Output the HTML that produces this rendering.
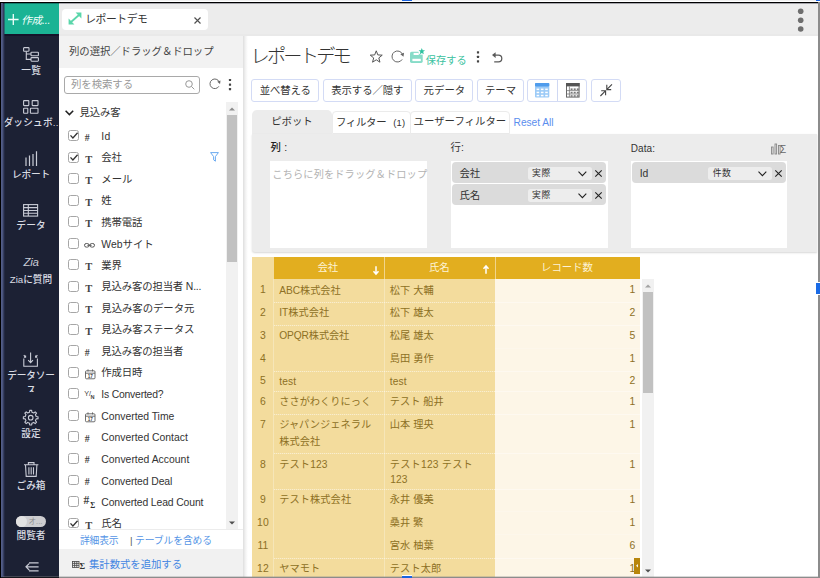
<!DOCTYPE html>
<html lang="ja"><head><meta charset="utf-8"><title>レポートデモ</title><style>
html,body{margin:0;padding:0;}
body{width:820px;height:578px;overflow:hidden;position:relative;background:#fff;font-family:"Liberation Sans","Noto Sans CJK JP",sans-serif;}
.a{position:absolute;}
.t{white-space:nowrap;}
svg{overflow:visible;}
</style></head><body>
<div class="a" style="left:59px;top:3px;width:759px;height:33px;background:#ececec;"></div>
<div class="a" style="left:59px;top:34.4px;width:759px;height:1.2px;background:#e9e9e9;"></div>
<div class="a" style="left:3px;top:3px;width:56px;height:575px;background:#1c2134;"></div>
<div class="a" style="left:3px;top:3px;width:56px;height:31px;background:#1bb394;"></div>
<svg class="a" style="left:7.8px;top:13.5px;" width="10.6" height="11" viewBox="0 0 10.6 11"><path d="M5.3 0V11M0 5.5H10.6" stroke="#f2fffb" stroke-width="1.3" fill="none"/></svg>
<div class="a t" style="top:12.55px;height:15.9px;line-height:15.9px;font-size:10.6px;color:#f4fffc;letter-spacing:-0.206px;left:21.2px;font-style:italic;"><span id="t1">作成...</span></div>
<div class="a" style="left:3px;top:34px;width:56px;height:1.6px;background:#15132a;"></div>
<div class="a" style="left:62.3px;top:9.2px;width:145.5px;height:21px;background:#fff;border-radius:4px;"></div>
<svg class="a" style="left:67.5px;top:12.3px;" width="14" height="13" viewBox="0 0 14 13"><path d="M3 10L11 3" stroke="#5ad6aa" stroke-width="1.8" fill="none"/><path d="M7.6 0.6H13.4V6.4Z M0.6 6.6V12.4H6.4Z" fill="#5ad6aa"/></svg>
<div class="a t" style="top:11.4px;height:16.2px;line-height:16.2px;font-size:10.8px;color:#333;letter-spacing:-0.413px;left:85.2px;"><span id="t2">レポートデモ</span></div>
<svg class="a" style="left:193.5px;top:16.5px;" width="7" height="7" viewBox="0 0 7 7"><path d="M0.5 0.5L6.5 6.5M6.5 0.5L0.5 6.5" stroke="#505050" stroke-width="1.15" fill="none"/></svg>
<svg class="a" style="left:797px;top:7px;" width="8" height="26" viewBox="0 0 8 26"><g fill="#6e6e6e"><circle cx="3.7" cy="4.2" r="2.8"/><circle cx="3.7" cy="13.2" r="2.8"/><circle cx="3.7" cy="22" r="2.8"/></g></svg>
<svg class="a" style="left:23px;top:47px;" width="16" height="15" viewBox="0 0 16 15"><g stroke="#c9ccd6" stroke-width="1.1" fill="none"><rect x="0.6" y="0.6" width="5.4" height="3.6" rx="0.6"/><rect x="8" y="5.2" width="7.4" height="3.6" rx="0.6"/><rect x="8" y="10.6" width="7.4" height="3.6" rx="0.6"/><path d="M3.3 4.2V12.4H8M3.3 7H8"/></g></svg>
<div class="a t" style="top:64.45px;height:14.5px;line-height:14.5px;font-size:9.7px;color:#d9dce3;font-weight:500;letter-spacing:0.312px;left:-119px;width:300px;text-align:center;text-indent:0.312px;"><span id="t3">一覧</span></div>
<svg class="a" style="left:23px;top:99.5px;" width="16" height="14" viewBox="0 0 16 14"><g stroke="#c9ccd6" stroke-width="1.1" fill="none"><rect x="0.6" y="0.6" width="5.2" height="5" rx="0.5"/><rect x="9.2" y="0.6" width="5.8" height="5" rx="0.5"/><rect x="0.6" y="8.2" width="4.2" height="5" rx="0.5"/><rect x="7.4" y="8.2" width="7.6" height="5" rx="0.5"/></g></svg>
<div class="a t" style="top:116.25px;height:14.5px;line-height:14.5px;font-size:9.7px;color:#dcdfe6;font-weight:500;letter-spacing:0.167px;left:3.5px;"><span id="t4">ダッシュボ..</span></div>
<svg class="a" style="left:24.5px;top:151px;" width="13" height="15" viewBox="0 0 13 15"><g stroke="#c9ccd6" stroke-width="1.2" fill="none"><path d="M1 15V6.4M4.5 15V4.6M8 15V3M11.5 15V0.3"/></g></svg>
<div class="a t" style="top:168.25px;height:14.5px;line-height:14.5px;font-size:9.7px;color:#d9dce3;font-weight:500;letter-spacing:-0.188px;left:-119px;width:300px;text-align:center;text-indent:-0.188px;"><span id="t5">レポート</span></div>
<svg class="a" style="left:23px;top:204px;" width="16" height="13" viewBox="0 0 16 13"><g stroke="#c9ccd6" stroke-width="1.1" fill="none"><rect x="0.6" y="0.6" width="14" height="11.5"/><path d="M0.6 3.6H14.6M0.6 6.5H14.6M0.6 9.3H14.6M5.3 0.6V12"/></g></svg>
<div class="a t" style="top:219.25px;height:14.5px;line-height:14.5px;font-size:9.7px;color:#d9dce3;font-weight:500;letter-spacing:0.141px;left:-119px;width:300px;text-align:center;text-indent:0.141px;"><span id="t6">データ</span></div>
<div class="a t" style="top:253.9px;height:17.2px;line-height:17.2px;font-size:11.5px;color:#c9ccd6;font-family:'Liberation Sans',sans-serif;left:-119px;width:300px;text-align:center;font-style:italic;letter-spacing:-0.3px;"><span id="t7">Zia</span></div>
<div class="a t" style="top:272.65px;height:14.5px;line-height:14.5px;font-size:9.7px;color:#d9dce3;font-weight:500;letter-spacing:-0.005px;left:-119px;width:300px;text-align:center;text-indent:-0.005px;"><span id="t8">Ziaに質問</span></div>
<svg class="a" style="left:23px;top:352px;" width="16" height="15" viewBox="0 0 16 15"><g stroke="#c9ccd6" stroke-width="1.1" fill="none"><path d="M0.8 6.5V14.2H14.4V6.5"/><path d="M7.6 0.5V10.5M5.2 8.2L7.6 10.6L10 8.2"/><path d="M0.8 3.2L2.5 5M2.6 3.4V5.2H0.9M14.4 3.2L12.7 5M12.6 3.4V5.2H14.3"/></g></svg>
<div class="a t" style="top:369.15px;height:14.5px;line-height:14.5px;font-size:9.7px;color:#d9dce3;font-weight:500;letter-spacing:-0.188px;left:-119px;width:300px;text-align:center;text-indent:-0.188px;"><span id="t9">データソー</span></div>
<div class="a t" style="top:384.25px;height:14.5px;line-height:14.5px;font-size:9.7px;color:#d9dce3;font-weight:500;letter-spacing:-2.188px;left:-119px;width:300px;text-align:center;text-indent:-2.188px;height:7.3px;overflow:hidden;"><span id="t10">ス</span></div>
<svg class="a" style="left:23px;top:410px;" width="16" height="16" viewBox="0 0 16 16"><g stroke="#c9ccd6" stroke-width="1.1" fill="none" stroke-linejoin="round"><path d="M13.17 6.52L15.03 6.71L15.03 8.69L13.17 8.88L12.40 10.74L13.58 12.19L12.19 13.58L10.74 12.40L8.88 13.17L8.69 15.03L6.71 15.03L6.52 13.17L4.66 12.40L3.21 13.58L1.82 12.19L3.00 10.74L2.23 8.88L0.37 8.69L0.37 6.71L2.23 6.52L3.00 4.66L1.82 3.21L3.21 1.82L4.66 3.00L6.52 2.23L6.71 0.37L8.69 0.37L8.88 2.23L10.74 3.00L12.19 1.82L13.58 3.21L12.40 4.66Z"/><circle cx="7.7" cy="7.7" r="2.3"/></g></svg>
<div class="a t" style="top:427.05px;height:14.5px;line-height:14.5px;font-size:9.7px;color:#d9dce3;font-weight:500;letter-spacing:0.062px;left:-119px;width:300px;text-align:center;text-indent:0.062px;"><span id="t11">設定</span></div>
<svg class="a" style="left:24.1px;top:461.6px;" width="14.4" height="15" viewBox="0 0 14.4 15"><g stroke="#c9ccd6" stroke-width="1.1" fill="none"><path d="M0 2.8H14.4M4.4 2.6V0.6H10V2.6M1.5 3L2.2 14.4H12.2L12.9 3M4.9 5.2V12.4M7.2 5.2V12.4M9.5 5.2V12.4"/></g></svg>
<div class="a t" style="top:478.65px;height:14.5px;line-height:14.5px;font-size:9.7px;color:#d9dce3;font-weight:500;letter-spacing:-0.021px;left:-119px;width:300px;text-align:center;text-indent:-0.021px;"><span id="t12">ごみ箱</span></div>
<div class="a" style="left:16px;top:516px;width:30px;height:11px;background:#cdcdd0;border-radius:6px;"></div>
<div class="a" style="left:16.4px;top:516.4px;width:10.2px;height:10.2px;background:#e2e2e2;border-radius:6px;"></div>
<div class="a t" style="top:515.9px;height:11.4px;line-height:11.4px;font-size:7.6px;color:#8f8f8f;letter-spacing:-0.082px;left:28.6px;"><span id="t13">オ...</span></div>
<div class="a t" style="top:529.15px;height:14.5px;line-height:14.5px;font-size:9.7px;color:#d9dce3;font-weight:500;letter-spacing:-0.021px;left:-119px;width:300px;text-align:center;text-indent:-0.021px;"><span id="t14">閲覧者</span></div>
<svg class="a" style="left:24.5px;top:562px;" width="14" height="10" viewBox="0 0 14 10"><g stroke="#c9ccd6" stroke-width="1.2" fill="none"><path d="M4 0.8H13.6M1 4.8H13.6M4 8.8H13.6M4.2 1.6L1 4.8L4.2 8"/></g></svg>
<div class="a" style="left:59px;top:36px;width:184px;height:32px;background:#f2f2f2;"></div>
<div class="a" style="left:243px;top:36px;width:4.5px;height:542px;background:linear-gradient(90deg,#dedede,#f4f4f4 55%,#fff);"></div>
<div class="a t" style="top:43.7px;height:15.6px;line-height:15.6px;font-size:10.4px;color:#444;letter-spacing:-0.07px;left:69px;"><span id="t15">列の選択／ドラッグ＆ドロップ</span></div>
<div class="a" style="left:63.5px;top:75.5px;width:136px;height:18.5px;background:#fff;border:1px solid #a9a9a9;box-sizing:border-box;border-radius:3px;"></div>
<div class="a t" style="top:76.5px;height:15.6px;line-height:15.6px;font-size:10.4px;color:#999;letter-spacing:-0.057px;left:71px;"><span id="t16">列を検索する</span></div>
<svg class="a" style="left:185px;top:80px;" width="10" height="10" viewBox="0 0 10 10"><g stroke="#999" stroke-width="1" fill="none"><circle cx="4" cy="4" r="3.3"/><path d="M6.5 6.5L9.3 9.3"/></g></svg>
<svg class="a" style="left:207.6px;top:77.2px;" width="13.6" height="13.6" viewBox="-6.8 -6.8 13.6 13.6"><path d="M4.07 2.54A4.8 4.8 0 1 1 4.45 -1.80" stroke="#666" stroke-width="1.0" fill="none"/><path d="M5.24 0.15L5.69 -3.36L2.47 -2.06Z" fill="#666"/></svg>
<svg class="a" style="left:228px;top:78px;" width="4" height="13" viewBox="0 0 4 13"><g fill="#444"><rect x="0.9" y="0.9" width="2.2" height="2.2" rx="0.5"/><rect x="0.9" y="5.5" width="2.2" height="2.2" rx="0.5"/><rect x="0.9" y="10" width="2.2" height="2.2" rx="0.5"/></g></svg>
<div class="a" style="left:226.3px;top:101.7px;width:11.6px;height:427.5px;background:#f1f1f1;"></div>
<div class="a" style="left:227.3px;top:114.5px;width:9.6px;height:147.5px;background:#c1c1c1;"></div>
<svg class="a" style="left:229.2px;top:106.8px;" width="6" height="4" viewBox="0 0 6 4"><path d="M0 3.5L3 0.5L6 3.5Z" fill="#8c8c8c"/></svg>
<svg class="a" style="left:229.2px;top:521px;" width="6" height="4" viewBox="0 0 6 4"><path d="M0 0.5L3 3.5L6 0.5Z" fill="#505050"/></svg>
<svg class="a" style="left:65.2px;top:110.4px;" width="9" height="6" viewBox="0 0 9 6"><path d="M0.6 0.7L4.4 4.6L8.2 0.7" stroke="#222" stroke-width="1.5" fill="none"/></svg>
<div class="a t" style="top:105.2px;height:15.6px;line-height:15.6px;font-size:10.4px;color:#333;letter-spacing:-0.141px;left:79.5px;"><span id="t17">見込み客</span></div>
<div class="a" style="left:68.2px;top:130.2px;width:10.8px;height:10.9px;background:#fff;border:1px solid #a6a6a6;box-sizing:border-box;border-radius:2.5px;"></div>
<svg class="a" style="left:70px;top:132.4px;" width="8" height="7" viewBox="0 0 8 7"><path d="M0.5 3.4L2.9 6L7.6 0.8" stroke="#333" stroke-width="1.3" fill="none"/></svg>
<div class="a t" style="top:130.55px;height:14.7px;line-height:14.7px;font-size:9.8px;color:#444;font-weight:700;font-family:'Liberation Serif',serif;left:84.8px;"><span id="t18">#</span></div>
<div class="a t" style="top:129.2px;height:15.6px;line-height:15.6px;font-size:10.4px;color:#333;letter-spacing:0.414px;left:101.3px;"><span id="t19">Id</span></div>
<div class="a" style="left:68.2px;top:151.72px;width:10.8px;height:10.9px;background:#fff;border:1px solid #a6a6a6;box-sizing:border-box;border-radius:2.5px;"></div>
<svg class="a" style="left:70px;top:153.92px;" width="8" height="7" viewBox="0 0 8 7"><path d="M0.5 3.4L2.9 6L7.6 0.8" stroke="#333" stroke-width="1.3" fill="none"/></svg>
<div class="a t" style="top:151.82px;height:15.8px;line-height:15.8px;font-size:10.5px;color:#444;font-weight:700;font-family:'Liberation Serif',serif;left:85.3px;"><span id="t20">T</span></div>
<div class="a t" style="top:150.02px;height:15.6px;line-height:15.6px;font-size:10.4px;color:#333;letter-spacing:-0.141px;left:101.3px;"><span id="t21">会社</span></div>
<div class="a" style="left:68.2px;top:173.24px;width:10.8px;height:10.9px;background:#fff;border:1px solid #a6a6a6;box-sizing:border-box;border-radius:2.5px;"></div>
<div class="a t" style="top:173.34px;height:15.8px;line-height:15.8px;font-size:10.5px;color:#444;font-weight:700;font-family:'Liberation Serif',serif;left:85.3px;"><span id="t22">T</span></div>
<div class="a t" style="top:171.54px;height:15.6px;line-height:15.6px;font-size:10.4px;color:#333;letter-spacing:-0.062px;left:101.3px;"><span id="t23">メール</span></div>
<div class="a" style="left:68.2px;top:194.76px;width:10.8px;height:10.9px;background:#fff;border:1px solid #a6a6a6;box-sizing:border-box;border-radius:2.5px;"></div>
<div class="a t" style="top:194.86px;height:15.8px;line-height:15.8px;font-size:10.5px;color:#444;font-weight:700;font-family:'Liberation Serif',serif;left:85.3px;"><span id="t24">T</span></div>
<div class="a t" style="top:193.06px;height:15.6px;line-height:15.6px;font-size:10.4px;color:#333;letter-spacing:0.109px;left:101.3px;"><span id="t25">姓</span></div>
<div class="a" style="left:68.2px;top:216.28px;width:10.8px;height:10.9px;background:#fff;border:1px solid #a6a6a6;box-sizing:border-box;border-radius:2.5px;"></div>
<div class="a t" style="top:216.38px;height:15.8px;line-height:15.8px;font-size:10.5px;color:#444;font-weight:700;font-family:'Liberation Serif',serif;left:85.3px;"><span id="t26">T</span></div>
<div class="a t" style="top:214.58px;height:15.6px;line-height:15.6px;font-size:10.4px;color:#333;letter-spacing:-0.141px;left:101.3px;"><span id="t27">携帯電話</span></div>
<div class="a" style="left:68.2px;top:237.8px;width:10.8px;height:10.9px;background:#fff;border:1px solid #a6a6a6;box-sizing:border-box;border-radius:2.5px;"></div>
<svg class="a" style="left:84.3px;top:242.6px;" width="11" height="5" viewBox="0 0 11 5"><g stroke="#555" stroke-width="1" fill="none"><rect x="0.5" y="0.5" width="4.6" height="3.6" rx="1.8"/><rect x="5.9" y="0.5" width="4.6" height="3.6" rx="1.8"/><path d="M3.4 2.3H7.6"/></g></svg>
<div class="a t" style="top:236.8px;height:15.6px;line-height:15.6px;font-size:10.4px;color:#333;letter-spacing:0.023px;left:101.3px;"><span id="t28">Webサイト</span></div>
<div class="a" style="left:68.2px;top:259.32px;width:10.8px;height:10.9px;background:#fff;border:1px solid #a6a6a6;box-sizing:border-box;border-radius:2.5px;"></div>
<div class="a t" style="top:259.42px;height:15.8px;line-height:15.8px;font-size:10.5px;color:#444;font-weight:700;font-family:'Liberation Serif',serif;left:85.3px;"><span id="t29">T</span></div>
<div class="a t" style="top:257.62px;height:15.6px;line-height:15.6px;font-size:10.4px;color:#333;letter-spacing:-0.141px;left:101.3px;"><span id="t30">業界</span></div>
<div class="a" style="left:68.2px;top:280.84px;width:10.8px;height:10.9px;background:#fff;border:1px solid #a6a6a6;box-sizing:border-box;border-radius:2.5px;"></div>
<div class="a t" style="top:280.94px;height:15.8px;line-height:15.8px;font-size:10.5px;color:#444;font-weight:700;font-family:'Liberation Serif',serif;left:85.3px;"><span id="t31">T</span></div>
<div class="a t" style="top:279.14px;height:15.6px;line-height:15.6px;font-size:10.4px;color:#333;letter-spacing:-0.168px;left:101.3px;"><span id="t32">見込み客の担当者 N...</span></div>
<div class="a" style="left:68.2px;top:302.36px;width:10.8px;height:10.9px;background:#fff;border:1px solid #a6a6a6;box-sizing:border-box;border-radius:2.5px;"></div>
<div class="a t" style="top:302.46px;height:15.8px;line-height:15.8px;font-size:10.5px;color:#444;font-weight:700;font-family:'Liberation Serif',serif;left:85.3px;"><span id="t33">T</span></div>
<div class="a t" style="top:300.66px;height:15.6px;line-height:15.6px;font-size:10.4px;color:#333;letter-spacing:-0.057px;left:101.3px;"><span id="t34">見込み客のデータ元</span></div>
<div class="a" style="left:68.2px;top:323.88px;width:10.8px;height:10.9px;background:#fff;border:1px solid #a6a6a6;box-sizing:border-box;border-radius:2.5px;"></div>
<div class="a t" style="top:323.98px;height:15.8px;line-height:15.8px;font-size:10.5px;color:#444;font-weight:700;font-family:'Liberation Serif',serif;left:85.3px;"><span id="t35">T</span></div>
<div class="a t" style="top:322.18px;height:15.6px;line-height:15.6px;font-size:10.4px;color:#333;letter-spacing:-0.057px;left:101.3px;"><span id="t36">見込み客ステータス</span></div>
<div class="a" style="left:68.2px;top:345.4px;width:10.8px;height:10.9px;background:#fff;border:1px solid #a6a6a6;box-sizing:border-box;border-radius:2.5px;"></div>
<div class="a t" style="top:345.75px;height:14.7px;line-height:14.7px;font-size:9.8px;color:#444;font-weight:700;font-family:'Liberation Serif',serif;left:84.8px;"><span id="t37">#</span></div>
<div class="a t" style="top:343.7px;height:15.6px;line-height:15.6px;font-size:10.4px;color:#333;letter-spacing:-0.141px;left:101.3px;"><span id="t38">見込み客の担当者</span></div>
<div class="a" style="left:68.2px;top:366.92px;width:10.8px;height:10.9px;background:#fff;border:1px solid #a6a6a6;box-sizing:border-box;border-radius:2.5px;"></div>
<svg class="a" style="left:84.8px;top:369.32px;" width="10.5" height="10.5" viewBox="0 0 10.5 10.5"><g stroke="#5e5e5e" stroke-width="0.9" fill="none"><rect x="0.5" y="1.8" width="9.5" height="8" rx="1"/><path d="M0.5 4.2H10M3 0.4V2.4M7.5 0.4V2.4"/></g><text x="5.25" y="8.9" font-size="4.6" text-anchor="middle" fill="#444" font-family="Liberation Sans,sans-serif" font-weight="700">17</text></svg>
<div class="a t" style="top:365.22px;height:15.6px;line-height:15.6px;font-size:10.4px;color:#333;letter-spacing:-0.141px;left:101.3px;"><span id="t39">作成日時</span></div>
<div class="a" style="left:68.2px;top:388.44px;width:10.8px;height:10.9px;background:#fff;border:1px solid #a6a6a6;box-sizing:border-box;border-radius:2.5px;"></div>
<div class="a t" style="top:388.64px;height:10.8px;line-height:10.8px;font-size:7.2px;color:#444;font-family:'Liberation Sans',sans-serif;left:84.3px;"><span id="t40">Y/</span></div>
<div class="a t" style="top:392.64px;height:8.4px;line-height:8.4px;font-size:5.6px;color:#444;font-weight:700;font-family:'Liberation Sans',sans-serif;left:90.6px;"><span id="t41">N</span></div>
<div class="a t" style="top:387.44px;height:15.6px;line-height:15.6px;font-size:10.4px;color:#333;letter-spacing:-0.207px;left:101.3px;"><span id="t42">Is Converted?</span></div>
<div class="a" style="left:68.2px;top:409.96px;width:10.8px;height:10.9px;background:#fff;border:1px solid #a6a6a6;box-sizing:border-box;border-radius:2.5px;"></div>
<svg class="a" style="left:84.8px;top:412.36px;" width="10.5" height="10.5" viewBox="0 0 10.5 10.5"><g stroke="#5e5e5e" stroke-width="0.9" fill="none"><rect x="0.5" y="1.8" width="9.5" height="8" rx="1"/><path d="M0.5 4.2H10M3 0.4V2.4M7.5 0.4V2.4"/></g><text x="5.25" y="8.9" font-size="4.6" text-anchor="middle" fill="#444" font-family="Liberation Sans,sans-serif" font-weight="700">17</text></svg>
<div class="a t" style="top:408.96px;height:15.6px;line-height:15.6px;font-size:10.4px;color:#333;letter-spacing:-0.025px;left:101.3px;"><span id="t43">Converted Time</span></div>
<div class="a" style="left:68.2px;top:431.48px;width:10.8px;height:10.9px;background:#fff;border:1px solid #a6a6a6;box-sizing:border-box;border-radius:2.5px;"></div>
<div class="a t" style="top:431.83px;height:14.7px;line-height:14.7px;font-size:9.8px;color:#444;font-weight:700;font-family:'Liberation Serif',serif;left:84.8px;"><span id="t44">#</span></div>
<div class="a t" style="top:430.48px;height:15.6px;line-height:15.6px;font-size:10.4px;color:#333;letter-spacing:-0.008px;left:101.3px;"><span id="t45">Converted Contact</span></div>
<div class="a" style="left:68.2px;top:453.0px;width:10.8px;height:10.9px;background:#fff;border:1px solid #a6a6a6;box-sizing:border-box;border-radius:2.5px;"></div>
<div class="a t" style="top:453.35px;height:14.7px;line-height:14.7px;font-size:9.8px;color:#444;font-weight:700;font-family:'Liberation Serif',serif;left:84.8px;"><span id="t46">#</span></div>
<div class="a t" style="top:452.0px;height:15.6px;line-height:15.6px;font-size:10.4px;color:#333;letter-spacing:0.011px;left:101.3px;"><span id="t47">Converted Account</span></div>
<div class="a" style="left:68.2px;top:474.52px;width:10.8px;height:10.9px;background:#fff;border:1px solid #a6a6a6;box-sizing:border-box;border-radius:2.5px;"></div>
<div class="a t" style="top:474.87px;height:14.7px;line-height:14.7px;font-size:9.8px;color:#444;font-weight:700;font-family:'Liberation Serif',serif;left:84.8px;"><span id="t48">#</span></div>
<div class="a t" style="top:473.52px;height:15.6px;line-height:15.6px;font-size:10.4px;color:#333;letter-spacing:-0.086px;left:101.3px;"><span id="t49">Converted Deal</span></div>
<div class="a" style="left:68.2px;top:496.04px;width:10.8px;height:10.9px;background:#fff;border:1px solid #a6a6a6;box-sizing:border-box;border-radius:2.5px;"></div>
<div class="a t" style="top:491.64px;height:17.2px;line-height:17.2px;font-size:11.5px;color:#444;font-weight:700;font-family:'Liberation Serif',serif;left:83.4px;"><span id="t50">#</span></div>
<div class="a t" style="top:499.54px;height:11.2px;line-height:11.2px;font-size:7.5px;color:#333;font-weight:700;font-family:'Liberation Serif',serif;left:90.2px;"><span id="t51">Σ</span></div>
<div class="a t" style="top:495.04px;height:15.6px;line-height:15.6px;font-size:10.4px;color:#333;letter-spacing:-0.128px;left:101.3px;"><span id="t52">Converted Lead Count</span></div>
<div class="a" style="left:68.2px;top:517.56px;width:10.8px;height:10.9px;background:#fff;border:1px solid #a6a6a6;box-sizing:border-box;border-radius:2.5px;"></div>
<svg class="a" style="left:70px;top:519.76px;" width="8" height="7" viewBox="0 0 8 7"><path d="M0.5 3.4L2.9 6L7.6 0.8" stroke="#333" stroke-width="1.3" fill="none"/></svg>
<div class="a t" style="top:517.66px;height:15.8px;line-height:15.8px;font-size:10.5px;color:#444;font-weight:700;font-family:'Liberation Serif',serif;left:85.3px;"><span id="t53">T</span></div>
<div class="a t" style="top:515.86px;height:15.6px;line-height:15.6px;font-size:10.4px;color:#333;letter-spacing:-0.141px;left:101.3px;"><span id="t54">氏名</span></div>
<svg class="a" style="left:210.2px;top:152.3px;" width="9" height="10" viewBox="0 0 9 10"><path d="M0.6 0.6H8.4L5.4 4.6V9.2L3.6 7.8V4.6Z" stroke="#5aa0ee" stroke-width="0.9" fill="none" stroke-linejoin="round"/></svg>
<div class="a" style="left:59px;top:529.4px;width:184px;height:19.4px;background:#fff;"></div>
<div class="a" style="left:59px;top:529.4px;width:184px;height:1px;background:#ececec;"></div>
<div class="a t" style="top:533.75px;height:14.7px;line-height:14.7px;font-size:9.8px;color:#5595e6;letter-spacing:-0.172px;left:80px;"><span id="t55">詳細表示</span></div>
<div class="a t" style="top:533.75px;height:14.7px;line-height:14.7px;font-size:9.8px;color:#555;left:130px;"><span id="t56">|</span></div>
<div class="a t" style="top:533.75px;height:14.7px;line-height:14.7px;font-size:9.8px;color:#5595e6;letter-spacing:-0.1px;left:135px;"><span id="t57">テーブルを含める</span></div>
<div class="a" style="left:59px;top:548.8px;width:184px;height:29px;background:#f1f1f1;"></div>
<svg class="a" style="left:72.1px;top:560.6px;" width="7.4" height="6.8" viewBox="0 0 7.4 6.8"><g stroke="#444" stroke-width="0.8" fill="none"><rect x="0.4" y="0.4" width="6.6" height="6"/><path d="M0.4 2.4H7M0.4 4.4H7M2.6 0.4V6.4M4.8 0.4V6.4"/></g></svg>
<div class="a t" style="top:559.6px;height:12.8px;line-height:12.8px;font-size:8.5px;color:#333;font-weight:700;font-family:'Liberation Serif',serif;left:79.5px;"><span id="t58">Σ</span></div>
<div class="a t" style="top:557.3px;height:15.6px;line-height:15.6px;font-size:10.4px;color:#4285e2;letter-spacing:-0.057px;left:89px;"><span id="t59">集計数式を追加する</span></div>
<div class="a t" style="top:43.0px;height:28.8px;line-height:28.8px;font-size:19.2px;color:#333;font-weight:300;letter-spacing:-2.771px;left:250.5px;"><span id="t60">レポートデモ</span></div>
<svg class="a" style="left:370px;top:50px;" width="13" height="13" viewBox="0 0 13 13"><path d="M6.25 0.80L7.84 4.92L12.24 5.15L8.82 7.93L9.95 12.20L6.25 9.80L2.55 12.20L3.68 7.93L0.26 5.15L4.66 4.92Z" stroke="#555" stroke-width="1" fill="none" stroke-linejoin="round"/></svg>
<svg class="a" style="left:389.5px;top:49.4px;" width="15.0" height="15.0" viewBox="-7.5 -7.5 15.0 15.0"><path d="M4.66 2.91A5.5 5.5 0 1 1 5.10 -2.06" stroke="#666" stroke-width="1.0" fill="none"/><path d="M6.00 0.16L6.52 -3.84L2.84 -2.36Z" fill="#666"/></svg>
<svg class="a" style="left:410.3px;top:48px;" width="16" height="15" viewBox="0 0 16 15"><rect x="0" y="3.8" width="12.7" height="11.1" rx="1.6" fill="#86dcc8"/><rect x="3.6" y="4.9" width="5.2" height="2.1" fill="#fff"/><rect x="2.4" y="10.8" width="8.4" height="2.3" fill="#fff"/><circle cx="11.9" cy="3.2" r="3.5" fill="#fff"/><path d="M11.80 0.00L12.68 2.19L15.03 2.35L13.23 3.86L13.80 6.15L11.80 4.90L9.80 6.15L10.37 3.86L8.57 2.35L10.92 2.19Z" fill="#2fc2a0"/></svg>
<div class="a t" style="top:52.55px;height:15.3px;line-height:15.3px;font-size:10.2px;color:#3cc2a0;letter-spacing:0.062px;left:425.8px;"><span id="t61">保存する</span></div>
<svg class="a" style="left:475.5px;top:50px;" width="4" height="14" viewBox="0 0 4 14"><g fill="#444"><rect x="0.9" y="1.2" width="2.2" height="2.2" rx="0.5"/><rect x="0.9" y="5.7" width="2.2" height="2.2" rx="0.5"/><rect x="0.9" y="10.2" width="2.2" height="2.2" rx="0.5"/></g></svg>
<svg class="a" style="left:492px;top:51.6px;" width="11" height="11" viewBox="0 0 11 11"><path d="M2.6 3.1H6.4A3.4 3.4 0 0 1 6.4 9.9H2.2" stroke="#5a5a5a" stroke-width="1.25" fill="none"/><path d="M0 3.1L3.6 0.2V6Z" fill="#5a5a5a"/></svg>
<div class="a" style="left:251.2px;top:79px;width:67.8px;height:22.5px;background:#fff;border:1px solid #d3dbf5;box-sizing:border-box;border-radius:3px;"></div>
<div class="a t" style="top:82.6px;height:15.6px;line-height:15.6px;font-size:10.4px;color:#333;letter-spacing:-0.131px;left:259.7px;"><span id="t62">並べ替える</span></div>
<div class="a" style="left:323.2px;top:79px;width:88.8px;height:22.5px;background:#fff;border:1px solid #d3dbf5;box-sizing:border-box;border-radius:3px;"></div>
<div class="a t" style="top:82.6px;height:15.6px;line-height:15.6px;font-size:10.4px;color:#333;letter-spacing:-0.077px;left:331.2px;"><span id="t63">表示する／隠す</span></div>
<div class="a" style="left:415.2px;top:79px;width:57.6px;height:22.5px;background:#fff;border:1px solid #d3dbf5;box-sizing:border-box;border-radius:3px;"></div>
<div class="a t" style="top:82.6px;height:15.6px;line-height:15.6px;font-size:10.4px;color:#333;letter-spacing:0.009px;left:423.6px;"><span id="t64">元データ</span></div>
<div class="a" style="left:477px;top:79px;width:46.5px;height:22.5px;background:#fff;border:1px solid #d3dbf5;box-sizing:border-box;border-radius:3px;"></div>
<div class="a t" style="top:82.6px;height:15.6px;line-height:15.6px;font-size:10.4px;color:#333;letter-spacing:-0.062px;left:485px;"><span id="t65">テーマ</span></div>
<div class="a" style="left:527.3px;top:79px;width:60px;height:22.5px;background:#fff;border:1px solid #d3dbf5;box-sizing:border-box;border-radius:3px;"></div>
<div class="a" style="left:557px;top:80px;width:1px;height:21px;background:#cfd8f3;"></div>
<svg class="a" style="left:535.4px;top:82.9px;" width="14.3" height="14.6" viewBox="0 0 14.3 14.6"><rect x="0" y="0" width="14.3" height="14.6" rx="1" fill="#9ccbf7"/><rect x="0" y="0" width="14.3" height="3.4" rx="0.8" fill="#4f9cec"/><rect x="1.6" y="5.6" width="2.6" height="1.5" fill="#fff"/><rect x="5.9" y="5.6" width="2.6" height="1.5" fill="#fff"/><rect x="10.2" y="5.6" width="2.6" height="1.5" fill="#fff"/><rect x="1.6" y="8.7" width="2.6" height="1.5" fill="#fff"/><rect x="5.9" y="8.7" width="2.6" height="1.5" fill="#fff"/><rect x="10.2" y="8.7" width="2.6" height="1.5" fill="#fff"/><rect x="1.6" y="11.8" width="2.6" height="1.5" fill="#fff"/><rect x="5.9" y="11.8" width="2.6" height="1.5" fill="#fff"/><rect x="10.2" y="11.8" width="2.6" height="1.5" fill="#fff"/></svg>
<svg class="a" style="left:565.7px;top:82.9px;" width="13.6" height="14.6" viewBox="0 0 13.6 14.6"><rect x="0.5" y="0.5" width="12.6" height="13.6" fill="#fff" stroke="#666" stroke-width="1"/><rect x="0" y="0" width="13.6" height="3.4" fill="#555"/><path d="M0.5 7.6H13M0.5 11H13M3.4 3.4V14" stroke="#777" stroke-width="0.8" fill="none"/><rect x="4.6" y="5.4" width="2" height="1.6" fill="#777"/><rect x="7.7" y="5.4" width="2" height="1.6" fill="#777"/><rect x="10.8" y="5.4" width="2" height="1.6" fill="#777"/><rect x="4.6" y="8.8" width="2" height="1.6" fill="#777"/><rect x="7.7" y="8.8" width="2" height="1.6" fill="#777"/><rect x="10.8" y="8.8" width="2" height="1.6" fill="#777"/><rect x="4.6" y="12.2" width="2" height="1.6" fill="#777"/><rect x="7.7" y="12.2" width="2" height="1.6" fill="#777"/><rect x="10.8" y="12.2" width="2" height="1.6" fill="#777"/></svg>
<div class="a" style="left:591px;top:79px;width:30px;height:22.5px;background:#fff;border:1px solid #d3dbf5;box-sizing:border-box;border-radius:3px;"></div>
<svg class="a" style="left:599.8px;top:84px;" width="12.4" height="12.4" viewBox="0 0 12.4 12.4"><g stroke="#444" stroke-width="1.1" fill="none"><path d="M0.4 12L5.2 7.2M1.2 6.8H5.6V11.2"/><path d="M12 0.4L7.2 5.2M6.8 0.8V5.6H11.2"/></g></svg>
<div class="a" style="left:251.8px;top:110.4px;width:80.3px;height:24px;background:#ececec;border-radius:5px 5px 0 0;"></div>
<div class="a t" style="top:114.4px;height:15.6px;line-height:15.6px;font-size:10.4px;color:#333;letter-spacing:-0.016px;left:271.2px;"><span id="t66">ピボット</span></div>
<div class="a" style="left:332px;top:111px;width:78.5px;height:23.2px;background:#fff;border:1px solid #ebebeb;box-sizing:border-box;border-radius:4px 4px 0 0;"></div>
<div class="a t" style="top:114.6px;height:15.6px;line-height:15.6px;font-size:10.4px;color:#333;letter-spacing:-0.25px;left:335.9px;"><span id="t67">フィルター</span></div>
<div class="a t" style="top:115.75px;height:14.1px;line-height:14.1px;font-size:9.4px;color:#333;letter-spacing:0.246px;left:393.2px;"><span id="t68">(1)</span></div>
<div class="a" style="left:410px;top:111px;width:100px;height:23.2px;background:#fff;border:1px solid #ebebeb;box-sizing:border-box;border-radius:4px 4px 0 0;"></div>
<div class="a t" style="top:114.4px;height:15.6px;line-height:15.6px;font-size:10.4px;color:#333;letter-spacing:0.014px;left:413.6px;"><span id="t69">ユーザーフィルター</span></div>
<div class="a t" style="top:115.25px;height:15.3px;line-height:15.3px;font-size:10.2px;color:#5a8eee;letter-spacing:-0.046px;left:513.6px;"><span id="t70">Reset All</span></div>
<div class="a" style="left:252.2px;top:134px;width:565.3px;height:118.2px;background:#ececec;border-radius:0 0 0 3px;box-shadow:0 1px 2px rgba(0,0,0,0.16);"></div>
<div class="a t" style="top:139.8px;height:15.6px;line-height:15.6px;font-size:10.4px;color:#222;font-weight:500;letter-spacing:0.276px;left:270.5px;"><span id="t71">列 :</span></div>
<div class="a t" style="top:139.8px;height:15.6px;line-height:15.6px;font-size:10.4px;color:#333;letter-spacing:0.109px;left:450.5px;"><span id="t72">行:</span></div>
<div class="a t" style="top:140.9px;height:15.0px;line-height:15.0px;font-size:10px;color:#333;letter-spacing:0.119px;left:630.7px;"><span id="t73">Data:</span></div>
<div class="a" style="left:270.4px;top:161px;width:157px;height:86.5px;background:#fff;"></div>
<div class="a" style="left:451px;top:161px;width:156.5px;height:86.5px;background:#fff;"></div>
<div class="a" style="left:630.5px;top:161px;width:156.5px;height:86.5px;background:#fff;"></div>
<div class="a t" style="top:166.65px;height:15.3px;line-height:15.3px;font-size:10.2px;color:#b3b3b3;letter-spacing:0.145px;left:272.3px;"><span id="t74">こちらに列をドラッグ＆ドロップ</span></div>
<svg class="a" style="left:770.5px;top:143px;" width="16" height="12" viewBox="0 0 16 12"><g stroke="#888" stroke-width="0.9" fill="none"><rect x="0.5" y="4" width="1.6" height="7"/><rect x="4" y="1" width="1.6" height="10"/><rect x="7.5" y="2.5" width="1.6" height="8.5"/></g></svg>
<div class="a t" style="top:142.3px;height:15.8px;line-height:15.8px;font-size:10.5px;color:#666;font-family:'Liberation Sans',sans-serif;left:779.7px;"><span id="t75">Σ</span></div>
<div class="a" style="left:452.2px;top:162.2px;width:153.8px;height:20.6px;background:#dbdbdb;border-radius:4px;"></div>
<div class="a t" style="top:165.9px;height:15.6px;line-height:15.6px;font-size:10.4px;color:#333;letter-spacing:-0.141px;left:459.5px;"><span id="t76">会社</span></div>
<div class="a" style="left:528px;top:166.8px;width:63.5px;height:13px;background:#ededed;border-radius:2.5px;"></div>
<div class="a t" style="top:166.6px;height:13.2px;line-height:13.2px;font-size:8.8px;color:#333;letter-spacing:0.703px;left:532px;"><span id="t77">実際</span></div>
<svg class="a" style="left:578.3px;top:170.6px;" width="9" height="6" viewBox="0 0 9 6"><path d="M0.5 0.7L4.4 4.6L8.3 0.7" stroke="#222" stroke-width="1.1" fill="none"/></svg>
<svg class="a" style="left:594.7px;top:170.0px;" width="7" height="7" viewBox="0 0 7 7"><path d="M0.3 0.3L6.7 6.7M6.7 0.3L0.3 6.7" stroke="#222" stroke-width="1.1" fill="none"/></svg>
<div class="a" style="left:452.2px;top:184.39999999999998px;width:153.8px;height:20.6px;background:#dbdbdb;border-radius:4px;"></div>
<div class="a t" style="top:188.1px;height:15.6px;line-height:15.6px;font-size:10.4px;color:#333;letter-spacing:-0.141px;left:459.5px;"><span id="t78">氏名</span></div>
<div class="a" style="left:528px;top:189.0px;width:63.5px;height:13px;background:#ededed;border-radius:2.5px;"></div>
<div class="a t" style="top:188.8px;height:13.2px;line-height:13.2px;font-size:8.8px;color:#333;letter-spacing:0.703px;left:532px;"><span id="t79">実際</span></div>
<svg class="a" style="left:578.3px;top:192.79999999999998px;" width="9" height="6" viewBox="0 0 9 6"><path d="M0.5 0.7L4.4 4.6L8.3 0.7" stroke="#222" stroke-width="1.1" fill="none"/></svg>
<svg class="a" style="left:594.7px;top:192.2px;" width="7" height="7" viewBox="0 0 7 7"><path d="M0.3 0.3L6.7 6.7M6.7 0.3L0.3 6.7" stroke="#222" stroke-width="1.1" fill="none"/></svg>
<div class="a" style="left:632.3px;top:162.2px;width:153.7px;height:20.6px;background:#dbdbdb;border-radius:4px;"></div>
<div class="a t" style="top:166.3px;height:15.6px;line-height:15.6px;font-size:10.4px;color:#333;letter-spacing:-0.086px;left:639.8px;"><span id="t80">Id</span></div>
<div class="a" style="left:708.4px;top:166.8px;width:63.3px;height:13px;background:#ededed;border-radius:2.5px;"></div>
<div class="a t" style="top:166.6px;height:13.2px;line-height:13.2px;font-size:8.8px;color:#333;letter-spacing:0.453px;left:712.8px;"><span id="t81">件数</span></div>
<svg class="a" style="left:758.4px;top:170.6px;" width="9" height="6" viewBox="0 0 9 6"><path d="M0.5 0.7L4.4 4.6L8.3 0.7" stroke="#222" stroke-width="1.1" fill="none"/></svg>
<svg class="a" style="left:774.7px;top:170.0px;" width="7" height="7" viewBox="0 0 7 7"><path d="M0.3 0.3L6.7 6.7M6.7 0.3L0.3 6.7" stroke="#222" stroke-width="1.1" fill="none"/></svg>
<div class="a" style="left:252.2px;top:257px;width:243.2px;height:321px;background:#f3dc9d;"></div>
<div class="a" style="left:495.4px;top:278.6px;width:145.0px;height:299.4px;background:#fdf6e7;"></div>
<div class="a" style="left:273.7px;top:257px;width:366.7px;height:21.6px;background:#e2ae1f;"></div>
<div class="a" style="left:384.1px;top:257px;width:1px;height:21.6px;background:#f1d58c;"></div>
<div class="a" style="left:494.9px;top:257px;width:1px;height:21.6px;background:#f1d58c;"></div>
<div class="a t" style="top:259.9px;height:15.6px;line-height:15.6px;font-size:10.4px;color:#fdf3d6;letter-spacing:-0.141px;left:177.8px;width:300px;text-align:center;text-indent:-0.141px;"><span id="t82">会社</span></div>
<div class="a t" style="top:259.9px;height:15.6px;line-height:15.6px;font-size:10.4px;color:#fdf3d6;letter-spacing:-0.141px;left:289.4px;width:300px;text-align:center;text-indent:-0.141px;"><span id="t83">氏名</span></div>
<div class="a t" style="top:259.9px;height:15.6px;line-height:15.6px;font-size:10.4px;color:#fdf3d6;letter-spacing:0.009px;left:417px;width:300px;text-align:center;text-indent:0.009px;"><span id="t84">レコード数</span></div>
<svg class="a" style="left:372.8px;top:265.6px;" width="6" height="9" viewBox="0 0 6 9"><path d="M3 0.2V8M0.5 5.2L3 8L5.5 5.2" stroke="#fff" stroke-width="1.5" fill="none"/></svg>
<svg class="a" style="left:482.8px;top:265.2px;" width="6" height="9" viewBox="0 0 6 9"><path d="M3 8.8V1M0.5 3.8L3 1L5.5 3.8" stroke="#fff" stroke-width="1.5" fill="none"/></svg>
<div class="a" style="left:273.2px;top:278.6px;width:1px;height:299.4px;background:#f6e6b8;"></div>
<div class="a" style="left:384.1px;top:278.6px;width:1px;height:299.4px;background:#f6e6b8;"></div>
<div class="a" style="left:273.7px;top:301.9px;width:221.7px;height:1px;background:repeating-linear-gradient(90deg,rgba(255,255,255,0.5) 0,rgba(255,255,255,0.5) 1px,rgba(255,255,255,0.12) 1px,rgba(255,255,255,0.12) 2px);"></div>
<div class="a" style="left:495.4px;top:301.9px;width:145.0px;height:1px;background:rgba(255,255,255,0.4);"></div>
<div class="a" style="left:273.7px;top:324.7px;width:221.7px;height:1px;background:repeating-linear-gradient(90deg,rgba(255,255,255,0.5) 0,rgba(255,255,255,0.5) 1px,rgba(255,255,255,0.12) 1px,rgba(255,255,255,0.12) 2px);"></div>
<div class="a" style="left:495.4px;top:324.7px;width:145.0px;height:1px;background:rgba(255,255,255,0.4);"></div>
<div class="a" style="left:273.7px;top:370.5px;width:221.7px;height:1px;background:repeating-linear-gradient(90deg,rgba(255,255,255,0.5) 0,rgba(255,255,255,0.5) 1px,rgba(255,255,255,0.12) 1px,rgba(255,255,255,0.12) 2px);"></div>
<div class="a" style="left:495.4px;top:370.5px;width:145.0px;height:1px;background:rgba(255,255,255,0.4);"></div>
<div class="a" style="left:273.7px;top:391.0px;width:221.7px;height:1px;background:repeating-linear-gradient(90deg,rgba(255,255,255,0.5) 0,rgba(255,255,255,0.5) 1px,rgba(255,255,255,0.12) 1px,rgba(255,255,255,0.12) 2px);"></div>
<div class="a" style="left:495.4px;top:391.0px;width:145.0px;height:1px;background:rgba(255,255,255,0.4);"></div>
<div class="a" style="left:273.7px;top:414.3px;width:221.7px;height:1px;background:repeating-linear-gradient(90deg,rgba(255,255,255,0.5) 0,rgba(255,255,255,0.5) 1px,rgba(255,255,255,0.12) 1px,rgba(255,255,255,0.12) 2px);"></div>
<div class="a" style="left:495.4px;top:414.3px;width:145.0px;height:1px;background:rgba(255,255,255,0.4);"></div>
<div class="a" style="left:273.7px;top:453.0px;width:221.7px;height:1px;background:repeating-linear-gradient(90deg,rgba(255,255,255,0.5) 0,rgba(255,255,255,0.5) 1px,rgba(255,255,255,0.12) 1px,rgba(255,255,255,0.12) 2px);"></div>
<div class="a" style="left:495.4px;top:453.0px;width:145.0px;height:1px;background:rgba(255,255,255,0.4);"></div>
<div class="a" style="left:273.7px;top:489.1px;width:221.7px;height:1px;background:repeating-linear-gradient(90deg,rgba(255,255,255,0.5) 0,rgba(255,255,255,0.5) 1px,rgba(255,255,255,0.12) 1px,rgba(255,255,255,0.12) 2px);"></div>
<div class="a" style="left:495.4px;top:489.1px;width:145.0px;height:1px;background:rgba(255,255,255,0.4);"></div>
<div class="a" style="left:273.7px;top:557.7px;width:221.7px;height:1px;background:repeating-linear-gradient(90deg,rgba(255,255,255,0.5) 0,rgba(255,255,255,0.5) 1px,rgba(255,255,255,0.12) 1px,rgba(255,255,255,0.12) 2px);"></div>
<div class="a" style="left:495.4px;top:557.7px;width:145.0px;height:1px;background:rgba(255,255,255,0.4);"></div>
<div class="a" style="left:495.4px;top:347.5px;width:145.0px;height:1px;background:rgba(255,255,255,0.18);"></div>
<div class="a" style="left:495.4px;top:510.5px;width:145.0px;height:1px;background:rgba(255,255,255,0.18);"></div>
<div class="a" style="left:495.4px;top:533.5px;width:145.0px;height:1px;background:rgba(255,255,255,0.18);"></div>
<div class="a t" style="top:282.4px;height:15.6px;line-height:15.6px;font-size:10.4px;color:#8d7024;left:112.9px;width:300px;text-align:center;"><span id="t85">1</span></div>
<div class="a t" style="top:282.55px;height:15.3px;line-height:15.3px;font-size:10.2px;color:#8d7024;letter-spacing:-0.029px;left:279.2px;"><span id="t86">ABC株式会社</span></div>
<div class="a t" style="top:282.55px;height:15.3px;line-height:15.3px;font-size:10.2px;color:#8d7024;letter-spacing:0.081px;left:389.8px;"><span id="t87">松下 大輔</span></div>
<div class="a t" style="top:282.4px;height:15.6px;line-height:15.6px;font-size:10.4px;color:#8d7024;left:335.2px;width:300px;text-align:right;"><span id="t88">1</span></div>
<div class="a t" style="top:304.8px;height:15.6px;line-height:15.6px;font-size:10.4px;color:#8d7024;left:112.9px;width:300px;text-align:center;"><span id="t89">2</span></div>
<div class="a t" style="top:304.95px;height:15.3px;line-height:15.3px;font-size:10.2px;color:#8d7024;letter-spacing:0.031px;left:279.2px;"><span id="t90">IT株式会社</span></div>
<div class="a t" style="top:304.95px;height:15.3px;line-height:15.3px;font-size:10.2px;color:#8d7024;letter-spacing:0.081px;left:389.8px;"><span id="t91">松下 雄太</span></div>
<div class="a t" style="top:304.8px;height:15.6px;line-height:15.6px;font-size:10.4px;color:#8d7024;left:335.2px;width:300px;text-align:right;"><span id="t92">2</span></div>
<div class="a t" style="top:328.0px;height:15.6px;line-height:15.6px;font-size:10.4px;color:#8d7024;left:112.9px;width:300px;text-align:center;"><span id="t93">3</span></div>
<div class="a t" style="top:328.15px;height:15.3px;line-height:15.3px;font-size:10.2px;color:#8d7024;letter-spacing:-0.094px;left:279.2px;"><span id="t94">OPQR株式会社</span></div>
<div class="a t" style="top:328.15px;height:15.3px;line-height:15.3px;font-size:10.2px;color:#8d7024;letter-spacing:0.081px;left:389.8px;"><span id="t95">松尾 雄太</span></div>
<div class="a t" style="top:328.0px;height:15.6px;line-height:15.6px;font-size:10.4px;color:#8d7024;left:335.2px;width:300px;text-align:right;"><span id="t96">5</span></div>
<div class="a t" style="top:350.6px;height:15.6px;line-height:15.6px;font-size:10.4px;color:#8d7024;left:112.9px;width:300px;text-align:center;"><span id="t97">4</span></div>
<div class="a t" style="top:350.75px;height:15.3px;line-height:15.3px;font-size:10.2px;color:#8d7024;letter-spacing:0.081px;left:389.8px;"><span id="t98">島田 勇作</span></div>
<div class="a t" style="top:350.6px;height:15.6px;line-height:15.6px;font-size:10.4px;color:#8d7024;left:335.2px;width:300px;text-align:right;"><span id="t99">1</span></div>
<div class="a t" style="top:373.4px;height:15.6px;line-height:15.6px;font-size:10.4px;color:#8d7024;left:112.9px;width:300px;text-align:center;"><span id="t100">5</span></div>
<div class="a t" style="top:373.55px;height:15.3px;line-height:15.3px;font-size:10.2px;color:#8d7024;letter-spacing:0.145px;left:279.2px;"><span id="t101">test</span></div>
<div class="a t" style="top:373.55px;height:15.3px;line-height:15.3px;font-size:10.2px;color:#8d7024;letter-spacing:0.145px;left:389.8px;"><span id="t102">test</span></div>
<div class="a t" style="top:373.4px;height:15.6px;line-height:15.6px;font-size:10.4px;color:#8d7024;left:335.2px;width:300px;text-align:right;"><span id="t103">2</span></div>
<div class="a t" style="top:393.6px;height:15.6px;line-height:15.6px;font-size:10.4px;color:#8d7024;left:112.9px;width:300px;text-align:center;"><span id="t104">6</span></div>
<div class="a t" style="top:393.75px;height:15.3px;line-height:15.3px;font-size:10.2px;color:#8d7024;letter-spacing:0.033px;left:279.2px;"><span id="t105">ささがわくりにっく</span></div>
<div class="a t" style="top:393.75px;height:15.3px;line-height:15.3px;font-size:10.2px;color:#8d7024;letter-spacing:0.037px;left:389.8px;"><span id="t106">テスト 船井</span></div>
<div class="a t" style="top:393.6px;height:15.6px;line-height:15.6px;font-size:10.4px;color:#8d7024;left:335.2px;width:300px;text-align:right;"><span id="t107">1</span></div>
<div class="a t" style="top:416.9px;height:15.6px;line-height:15.6px;font-size:10.4px;color:#8d7024;left:112.9px;width:300px;text-align:center;"><span id="t108">7</span></div>
<div class="a t" style="top:417.05px;height:15.3px;line-height:15.3px;font-size:10.2px;color:#8d7024;letter-spacing:0.033px;left:279.2px;"><span id="t109">ジャパンジェネラル</span></div>
<div class="a t" style="top:417.05px;height:15.3px;line-height:15.3px;font-size:10.2px;color:#8d7024;letter-spacing:0.081px;left:389.8px;"><span id="t110">山本 理央</span></div>
<div class="a t" style="top:416.9px;height:15.6px;line-height:15.6px;font-size:10.4px;color:#8d7024;left:335.2px;width:300px;text-align:right;"><span id="t111">1</span></div>
<div class="a t" style="top:456.8px;height:15.6px;line-height:15.6px;font-size:10.4px;color:#8d7024;left:112.9px;width:300px;text-align:center;"><span id="t112">8</span></div>
<div class="a t" style="top:456.95px;height:15.3px;line-height:15.3px;font-size:10.2px;color:#8d7024;letter-spacing:0.156px;left:279.2px;"><span id="t113">テスト123</span></div>
<div class="a t" style="top:456.95px;height:15.3px;line-height:15.3px;font-size:10.2px;color:#8d7024;letter-spacing:0.225px;left:389.8px;"><span id="t114">テスト123 テスト</span></div>
<div class="a t" style="top:456.8px;height:15.6px;line-height:15.6px;font-size:10.4px;color:#8d7024;left:335.2px;width:300px;text-align:right;"><span id="t115">1</span></div>
<div class="a t" style="top:492.0px;height:15.6px;line-height:15.6px;font-size:10.4px;color:#8d7024;left:112.9px;width:300px;text-align:center;"><span id="t116">9</span></div>
<div class="a t" style="top:492.15px;height:15.3px;line-height:15.3px;font-size:10.2px;color:#8d7024;letter-spacing:0.098px;left:279.2px;"><span id="t117">テスト株式会社</span></div>
<div class="a t" style="top:492.15px;height:15.3px;line-height:15.3px;font-size:10.2px;color:#8d7024;letter-spacing:0.081px;left:389.8px;"><span id="t118">永井 優美</span></div>
<div class="a t" style="top:492.0px;height:15.6px;line-height:15.6px;font-size:10.4px;color:#8d7024;left:335.2px;width:300px;text-align:right;"><span id="t119">1</span></div>
<div class="a t" style="top:514.8px;height:15.6px;line-height:15.6px;font-size:10.4px;color:#8d7024;left:112.9px;width:300px;text-align:center;"><span id="t120">10</span></div>
<div class="a t" style="top:514.95px;height:15.3px;line-height:15.3px;font-size:10.2px;color:#8d7024;letter-spacing:0.023px;left:389.8px;"><span id="t121">桑井 繁</span></div>
<div class="a t" style="top:514.8px;height:15.6px;line-height:15.6px;font-size:10.4px;color:#8d7024;left:335.2px;width:300px;text-align:right;"><span id="t122">1</span></div>
<div class="a t" style="top:537.6px;height:15.6px;line-height:15.6px;font-size:10.4px;color:#8d7024;left:112.9px;width:300px;text-align:center;"><span id="t123">11</span></div>
<div class="a t" style="top:537.75px;height:15.3px;line-height:15.3px;font-size:10.2px;color:#8d7024;letter-spacing:0.081px;left:389.8px;"><span id="t124">宮水 柚葉</span></div>
<div class="a t" style="top:537.6px;height:15.6px;line-height:15.6px;font-size:10.4px;color:#8d7024;left:335.2px;width:300px;text-align:right;"><span id="t125">6</span></div>
<div class="a t" style="top:561.0px;height:15.6px;line-height:15.6px;font-size:10.4px;color:#8d7024;left:112.9px;width:300px;text-align:center;"><span id="t126">12</span></div>
<div class="a t" style="top:561.15px;height:15.3px;line-height:15.3px;font-size:10.2px;color:#8d7024;letter-spacing:0.062px;left:279.2px;"><span id="t127">ヤマモト</span></div>
<div class="a t" style="top:561.15px;height:15.3px;line-height:15.3px;font-size:10.2px;color:#8d7024;letter-spacing:0.11px;left:389.8px;"><span id="t128">テスト太郎</span></div>
<div class="a t" style="top:561.0px;height:15.6px;line-height:15.6px;font-size:10.4px;color:#8d7024;left:335.2px;width:300px;text-align:right;"><span id="t129">1</span></div>
<div class="a t" style="top:433.55px;height:15.3px;line-height:15.3px;font-size:10.2px;color:#8d7024;letter-spacing:0.062px;left:279.2px;"><span id="t130">株式会社</span></div>
<div class="a t" style="top:471.95px;height:15.3px;line-height:15.3px;font-size:10.2px;color:#8d7024;letter-spacing:0.167px;left:390.2px;"><span id="t131">123</span></div>
<div class="a" style="left:641.6px;top:278.6px;width:12.1px;height:299.4px;background:#f1f1f1;"></div>
<div class="a" style="left:642.7px;top:292px;width:10px;height:100.5px;background:#c1c1c1;"></div>
<svg class="a" style="left:644.7px;top:284px;" width="6" height="4" viewBox="0 0 6 4"><path d="M0 3.5L3 0.5L6 3.5Z" fill="#a3a3a3"/></svg>
<svg class="a" style="left:644.7px;top:568.5px;" width="6" height="4" viewBox="0 0 6 4"><path d="M0 0.5L3 3.5L6 0.5Z" fill="#505050"/></svg>
<div class="a" style="left:634px;top:558px;width:5.6px;height:16px;background:#b8860b;"></div>
<svg class="a" style="left:636.3px;top:564.3px;" width="2" height="3.4" viewBox="0 0 2 3.4"><path d="M2 0L0 1.7L2 3.4Z" fill="#fdf6e7"/></svg>
<div class="a" style="left:0px;top:0px;width:820px;height:1px;background:#f1f1f1;"></div>
<div class="a" style="left:0px;top:1px;width:820px;height:1px;background:#fff;"></div>
<div class="a" style="left:0px;top:2px;width:820px;height:1px;background:#000;"></div>
<div class="a" style="left:0px;top:2px;width:1px;height:576px;background:#000;"></div>
<div class="a" style="left:1px;top:3px;width:3.5px;height:575px;background:linear-gradient(90deg,#55608a 0,#4c5780 35%,#2a3150 75%,rgba(28,33,52,0) 100%);"></div>
<div class="a" style="left:817.5px;top:3px;width:0.5px;height:575px;background:#fff;"></div>
<div class="a" style="left:818px;top:2px;width:2px;height:576px;background:#8c8c8c;"></div>
<div class="a" style="left:3px;top:576px;width:817px;height:1px;background:rgba(140,140,140,0.35);"></div>
<div class="a" style="left:3px;top:577px;width:817px;height:1px;background:#8c8c8c;"></div>
<div class="a" style="left:1px;top:577px;width:58px;height:1px;background:#15161c;"></div>
<div class="a" style="left:402px;top:0px;width:10px;height:1px;background:#1a63e0;"></div>
<div class="a" style="left:3px;top:3px;width:815px;height:1px;background:rgba(0,0,20,0.3);"></div>
<div class="a" style="left:816px;top:0px;width:4px;height:1px;background:#1a63e0;"></div>
<div class="a" style="left:402px;top:576px;width:10px;height:2px;background:#1a63e0;border-top:1px solid #fff;box-sizing:content-box;top:575px;"></div>
<div class="a" style="left:816px;top:283px;width:4px;height:11px;background:#1a6be6;outline:1px solid #fff;"></div>
</body></html>
